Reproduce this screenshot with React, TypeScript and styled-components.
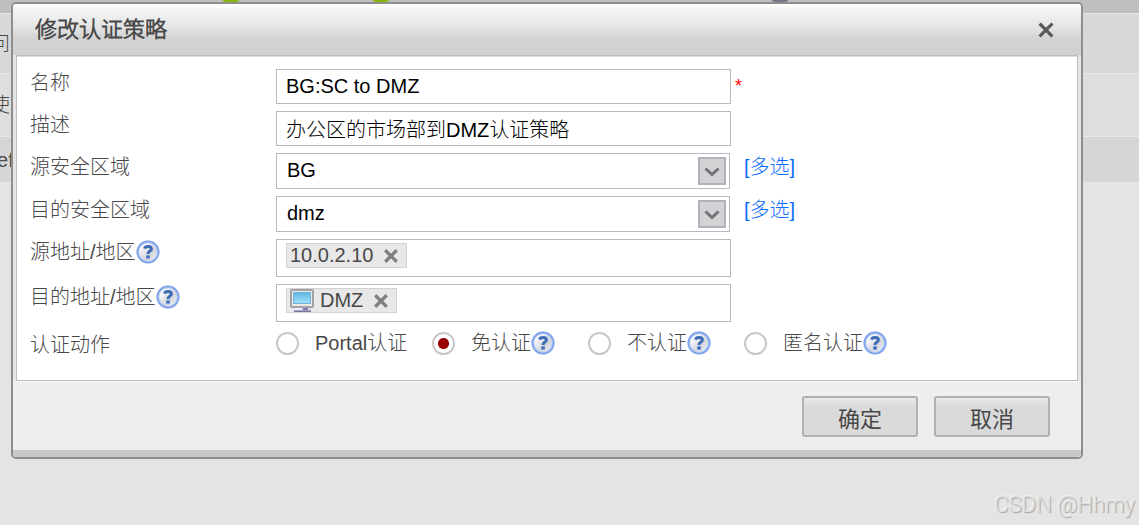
import React, { useState } from 'react';
import styled, { createGlobalStyle } from 'styled-components';

const GlobalStyle = createGlobalStyle`
  * { box-sizing: border-box; }
  body {
    margin: 0;
    background: #e4e4e4;
    color: #484848;
    font: 300 20px/28px "Liberation Sans", "Noto Sans CJK SC Light", "Noto Sans CJK SC", sans-serif;
  }
  input, select, button { font: inherit; color: inherit; margin: 0; }
`;

const Page = styled.div`
  position: relative;
  min-height: 100vh;
  overflow: hidden;
`;

const Backdrop = styled.div`
  position: absolute;
  inset: 0;
  overflow: hidden;
`;

const BackdropHeader = styled.div`
  display: grid;
  grid-template-columns: 221px 150px 399px auto;
  height: 13px;
  background: #bfbfc1;
`;

const BackdropRow = styled.div<{ $height: number; $tone: string; $scrolled: number }>`
  height: ${(p) => p.$height}px;
  line-height: ${(p) => p.$height}px;
  margin-left: -${(p) => p.$scrolled}px;
  border-top: 1px solid #e8e8e8;
  background: ${(p) => p.$tone};
`;

const Overlay = styled.div`
  position: relative;
  padding: 2px 56px 64px 11px;
`;

const Dialog = styled.form`
  border: 2px solid #8e8e8e;
  border-radius: 5px;
  overflow: hidden;
  background: #e6e6e6;
`;

const Header = styled.header`
  display: flex;
  align-items: center;
  justify-content: space-between;
  height: 51px;
  padding: 0 27px 0 22px;
  background: linear-gradient(#ffffff 0, #f6f6f6 10%, #e4e4e4 45%, #d4d4d4 65%, #d0d0d0 100%);
`;

const Title = styled.h1`
  margin: 0;
  font-size: 22px;
  line-height: 28px;
  font-weight: 700;
`;

const IconButton = styled.button`
  display: flex;
  padding: 0;
  border: 0;
  background: none;
  cursor: pointer;
`;

const Body = styled.div`
  display: flex;
  flex-direction: column;
  gap: 7px;
  margin: 0 3px;
  padding: 13px 13px 21px;
  border: 1px solid #bcbcbc;
  background: #fff;
  box-shadow: inset 0 1px #dcdcdc;
`;

const Row = styled.div`
  display: grid;
  grid-template-columns: 246px minmax(0, 455px) auto;
  align-items: start;
`;

const ActionRow = styled.div`
  display: grid;
  grid-template-columns: 246px 1fr;
  align-items: end;
`;

const ActionLabel = styled.span`
  line-height: 28px;
`;

const Label = styled.label`
  line-height: 28px;
`;

const LabelGroup = styled.div`
  display: flex;
  align-items: center;
  height: 26px;
`;

const TextInput = styled.input`
  width: 100%;
  height: 35px;
  padding: 0 9px;
  border: 1px solid #b9b9be;
  border-radius: 0;
  background: #fff;
  color: #000;
`;

const SelectBox = styled.div`
  position: relative;
  margin-right: 1px;
`;

const Select = styled.select`
  display: block;
  appearance: none;
  width: 100%;
  height: 36px;
  padding: 0 36px 2px 10px;
  border: 1px solid #b9b9be;
  border-radius: 0;
  background: #fff;
  color: #000;
`;

const SelectArrow = styled.svg`
  position: absolute;
  top: 4px;
  right: 4px;
  pointer-events: none;
`;

const Required = styled.span`
  padding-left: 4px;
  color: #f00;
  font-size: 18px;
  line-height: 35px;
`;

const MultiLink = styled.a`
  padding-left: 13px;
  color: #0a6cff;
  text-decoration: none;
`;

const TagField = styled.div`
  height: 38px;
  padding: 3px 9px;
  border: 1px solid #b9b9be;
`;

const Tag = styled.span`
  display: inline-flex;
  align-items: center;
  height: 25px;
  padding: 0 8px 0 3px;
  border: 1px solid #d2d2d2;
  background: #e8e8e8;
  line-height: 23px;
  vertical-align: top;
`;

const TagText = styled.span`
  padding-right: 11px;
`;

const Monitor = styled.svg`
  margin-right: 6px;
`;

const Choices = styled.div`
  display: grid;
  grid-template-columns: repeat(4, 156px);
  height: 30px;
`;

const Choice = styled.div`
  display: flex;
  align-items: center;
  height: 28px;
  white-space: nowrap;
`;

const Radio = styled.input`
  appearance: none;
  flex: none;
  width: 23px;
  height: 23px;
  border: 2px solid #c8c8c8;
  border-radius: 50%;
  background: #fff;
  &:checked {
    background: radial-gradient(circle, #9a0000 5px, #fff 6px);
  }
`;

const ChoiceLabel = styled.label`
  padding-left: 16px;
`;

const Footer = styled.footer`
  display: flex;
  justify-content: flex-end;
  gap: 16px;
  padding: 14px 31px 13px;
  border-top: 1px solid #fafafa;
  border-bottom: 7px solid #c8c8c8;
  background: #eeeeee;
`;

const Button = styled.button`
  width: 116px;
  height: 41px;
  padding: 0;
  border: 2px solid #b0b0b4;
  border-radius: 3px;
  background: linear-gradient(#ececec 0, #dadada 20%, #dadada 100%);
  font-family: "Noto Sans CJK SC", sans-serif;
  font-size: 22px;
  font-weight: 400;
  cursor: pointer;
`;

const Watermark = styled.div`
  position: absolute;
  right: 4px;
  bottom: 6px;
  color: #dedede;
  font-family: Roboto, sans-serif;
  font-size: 22px;
  text-shadow: 1px 1px 1px #a0a0a0, -1px -1px 1px #f2f2f2;
`;

const StatusIcon = ({ color }: { color: string }) => (
  <svg width="20" height="3" viewBox="0 0 20 3" aria-hidden="true">
    <ellipse cx="10" cy="-3" rx="10" ry="6" fill={color} />
  </svg>
);

const CrossIcon = ({ size, color, weight }: { size: number; color: string; weight: number }) => (
  <svg width={size} height={size} viewBox="0 0 14 14" aria-hidden="true">
    <path d="M2.4 2.4 L11.6 11.6 M11.6 2.4 L2.4 11.6" stroke={color} strokeWidth={weight} strokeLinecap="square" />
  </svg>
);

const HelpIcon = ({ id }: { id: string }) => (
  <svg width="24" height="24" viewBox="0 0 24 24" role="img" aria-label="帮助">
    <defs>
      <linearGradient id={id} x1="0" y1="0" x2="1" y2="1">
        <stop offset="0.2" stopColor="#fdfdff" />
        <stop offset="0.6" stopColor="#d4d6dc" />
        <stop offset="1" stopColor="#f6f8ff" />
      </linearGradient>
    </defs>
    <circle cx="12" cy="12" r="10.2" fill={`url(#${id})`} stroke="#b4caf5" strokeWidth="3" />
    <circle cx="12" cy="12" r="10.6" fill="none" stroke="#7a9fe8" strokeWidth="1.3" />
    <path d="M8.6 8.6 C9.2 5.8 15.4 5.8 15.4 8.9 C15.4 11.2 12 11 12 14" fill="none" stroke="#3d6cb8" strokeWidth="3" />
    <rect x="10.3" y="15.4" width="3.5" height="3.2" fill="#3d6cc0" />
  </svg>
);

const MonitorIcon = () => (
  <Monitor width="24" height="23" viewBox="0 0 24 23" aria-hidden="true">
    <defs>
      <linearGradient id="screen" x1="0" y1="0" x2="0" y2="1">
        <stop offset="0" stopColor="#5fb2e4" />
        <stop offset="1" stopColor="#a4e2fb" />
      </linearGradient>
    </defs>
    <rect x="1" y="1" width="22" height="17" rx="1" fill="#ecebe8" stroke="#a2a2a4" strokeWidth="2" />
    <rect x="3.5" y="3.5" width="17" height="11" fill="url(#screen)" stroke="#6fb4e0" strokeWidth="1" />
    <rect x="4" y="19" width="17" height="3" rx="1" fill="#d9d7ee" />
    <rect x="13" y="19" width="5" height="2" fill="#7d76b8" />
    <rect x="5" y="19" width="6" height="2" fill="#f4f4fc" />
    <rect x="4" y="21.5" width="17" height="1.5" fill="#77779a" />
  </Monitor>
);

const ArrowIcon = () => (
  <SelectArrow width="28" height="28" viewBox="0 0 28 28" aria-hidden="true">
    <rect x="1" y="1" width="26" height="26" fill="#d3d3d6" stroke="#b2b2ba" strokeWidth="2" />
    <path d="M7.5 11.5 L14 17.5 L20.5 11.5" fill="none" stroke="#747478" strokeWidth="3" />
  </SelectArrow>
);

const zones = [
  { id: 'source-zone', label: '源安全区域', options: ['BG', 'dmz'], value: 'BG' },
  { id: 'target-zone', label: '目的安全区域', options: ['BG', 'dmz'], value: 'dmz' },
];

const addresses = [
  { id: 'source-address', label: '源地址/地区', value: '10.0.2.10', host: false },
  { id: 'target-address', label: '目的地址/地区', value: 'DMZ', host: true },
];

const actions = [
  { id: 'portal', label: 'Portal认证', help: false },
  { id: 'exempt', label: '免认证', help: true },
  { id: 'none', label: '不认证', help: true },
  { id: 'anonymous', label: '匿名认证', help: true },
];

export default function App() {
  const [action, setAction] = useState('exempt');

  return (
    <Page>
      <GlobalStyle />
      <Backdrop aria-hidden="true">
        <BackdropHeader>
          <span />
          <StatusIcon color="#86b80c" />
          <StatusIcon color="#86b80c" />
          <StatusIcon color="#77778a" />
        </BackdropHeader>
        <BackdropRow $height={60} $tone="#d8d8d8" $scrolled={10}>问</BackdropRow>
        <BackdropRow $height={63} $tone="#dedede" $scrolled={10}>使</BackdropRow>
        <BackdropRow $height={46} $tone="#d6d6d6" $scrolled={14}>def</BackdropRow>
      </Backdrop>

      <Overlay>
        <Dialog role="dialog" aria-labelledby="dialog-title" onSubmit={(e) => e.preventDefault()}>
          <Header>
            <Title id="dialog-title">修改认证策略</Title>
            <IconButton type="button" aria-label="关闭">
              <CrossIcon size={16} color="#585858" weight={2.8} />
            </IconButton>
          </Header>

          <Body>
            <Row>
              <Label htmlFor="name">名称</Label>
              <TextInput id="name" defaultValue="BG:SC to DMZ" required />
              <Required>*</Required>
            </Row>
            <Row>
              <Label htmlFor="description">描述</Label>
              <TextInput id="description" defaultValue="办公区的市场部到DMZ认证策略" />
            </Row>
            {zones.map((zone) => (
              <Row key={zone.id}>
                <Label htmlFor={zone.id}>{zone.label}</Label>
                <SelectBox>
                  <Select id={zone.id} defaultValue={zone.value}>
                    {zone.options.map((option) => (
                      <option key={option}>{option}</option>
                    ))}
                  </Select>
                  <ArrowIcon />
                </SelectBox>
                <MultiLink href="#">[多选]</MultiLink>
              </Row>
            ))}
            {addresses.map((address) => (
              <Row key={address.id}>
                <LabelGroup>
                  <span id={address.id}>{address.label}</span>
                  <HelpIcon id={`${address.id}-help`} />
                </LabelGroup>
                <TagField role="group" aria-labelledby={address.id}>
                  <Tag>
                    {address.host && <MonitorIcon />}
                    <TagText>{address.value}</TagText>
                    <IconButton type="button" aria-label={`移除 ${address.value}`}>
                      <CrossIcon size={14} color="#808080" weight={3.4} />
                    </IconButton>
                  </Tag>
                </TagField>
              </Row>
            ))}
            <ActionRow role="radiogroup" aria-labelledby="action-label">
              <ActionLabel id="action-label">认证动作</ActionLabel>
              <Choices>
                {actions.map((item) => (
                  <Choice key={item.id}>
                    <Radio
                      type="radio"
                      id={item.id}
                      name="action"
                      checked={action === item.id}
                      onChange={() => setAction(item.id)}
                    />
                    <ChoiceLabel htmlFor={item.id}>{item.label}</ChoiceLabel>
                    {item.help && <HelpIcon id={`${item.id}-help`} />}
                  </Choice>
                ))}
              </Choices>
            </ActionRow>
          </Body>

          <Footer>
            <Button type="submit">确定</Button>
            <Button type="button">取消</Button>
          </Footer>
        </Dialog>
      </Overlay>

      <Watermark>CSDN @Hhmy</Watermark>
    </Page>
  );
}
